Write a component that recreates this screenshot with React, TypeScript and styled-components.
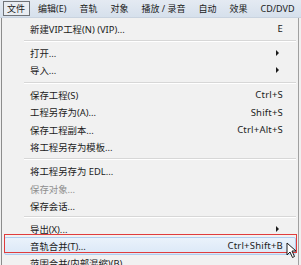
import React from "react";
import styled, { createGlobalStyle } from "styled-components";

const Global = createGlobalStyle`
  html, body { margin: 0; padding: 0; background: #f0f0f0; overflow: hidden; }
  #root { width: 301px; height: 265px; }
`;

const Page = styled.div`
  width: 301px;
  height: 265px;
  overflow: hidden;
  display: flex;
  flex-direction: column;
  background: #f0f0f0;
  font-family: "Noto Sans", "Noto Sans CJK SC", sans-serif;
  color: #1b1b1b;
`;

const MenuBar = styled.div`
  height: 18px;
  flex: none;
  display: flex;
  align-items: center;
  gap: 4px;
  padding-left: 3px;
  background: linear-gradient(#e4eaf2, #d6e0ec);
  border-bottom: 1px solid #c9d3df;
  box-sizing: border-box;
`;

const BarItem = styled.div<{ $active?: boolean }>`
  height: 15px;
  display: flex;
  align-items: center;
  padding: 0 4px 0 3px;
  font-size: 9px;
  line-height: 1;
  white-space: nowrap;
  border: 1px solid ${(p) => (p.$active ? "#6f7378" : "transparent")};
  background: ${(p) => (p.$active ? "#e9edf2" : "transparent")};
  box-sizing: border-box;
`;

const Menu = styled.div`
  flex: 1;
  margin: 0 2px 0 1px;
  border-left: 1px solid #8c8c8c;
  border-right: 1px solid #a0a0a0;
  background: #f1f1f1;
  padding: 2px 2px 0 2px;
  display: flex;
  flex-direction: column;
`;

const Row = styled.div<{ $disabled?: boolean; $hot?: boolean }>`
  position: relative;
  height: 17.4px;
  flex: none;
  display: flex;
  align-items: center;
  padding: 0 12px 0 25px;
  font-size: 9.4px;
  white-space: nowrap;
  color: ${(p) => (p.$disabled ? "#8e8e8e" : "#1b1b1b")};
  border: 1px solid ${(p) => (p.$hot ? "#b0cdef" : "transparent")};
  border-radius: 2px;
  background: ${(p) =>
    p.$hot ? "linear-gradient(#eaf2fb, #dbe8f7)" : "transparent"};
  box-sizing: border-box;
`;

const Label = styled.span`
  flex: 1;
`;

const Shortcut = styled.span`
  font-size: 9.5px;
  letter-spacing: 0.2px;
`;

const Arrow = styled.span`
  width: 0;
  height: 0;
  margin-right: 4px;
  border-top: 3px solid transparent;
  border-bottom: 3px solid transparent;
  border-left: 3px solid #1b1b1b;
`;

const Separator = styled.div<{ $h: number }>`
  height: ${(p) => p.$h}px;
  flex: none;
  display: flex;
  align-items: center;
  padding-left: 20px;
  &::after {
    content: "";
    flex: 1;
    height: 1px;
    background: #d7d7d7;
    border-bottom: 1px solid #ffffff;
  }
`;

const Annotation = styled.div`
  position: absolute;
  left: -1px;
  right: -2px;
  top: -4px;
  bottom: 1px;
  border: 1.5px solid #e03c3c;
  pointer-events: none;
`;

const Cursor = styled.svg`
  position: absolute;
  right: -2px;
  top: 4px;
`;

type Item =
  | { sep: number }
  | { label: string; shortcut?: string; sub?: boolean; disabled?: boolean; hot?: boolean };

const items: Item[] = [
  { label: "新建VIP工程(N) (VIP)...", shortcut: "E" },
  { sep: 7 },
  { label: "打开...", sub: true },
  { label: "导入...", sub: true },
  { sep: 7 },
  { label: "保存工程(S)", shortcut: "Ctrl+S" },
  { label: "工程另存为(A)...", shortcut: "Shift+S" },
  { label: "保存工程副本...", shortcut: "Ctrl+Alt+S" },
  { label: "将工程另存为模板..." },
  { sep: 7 },
  { label: "将工程另存为  EDL..." },
  { label: "保存对象...", disabled: true },
  { label: "保存会话..." },
  { sep: 5 },
  { label: "导出(X)...", sub: true },
  { label: "音轨合并(T)...", shortcut: "Ctrl+Shift+B", hot: true },
  { label: "范围合并(内部混缩)(B)" },
];

const bar = ["文件", "编辑(E)", "音轨", "对象", "播放 / 录音", "自动", "效果", "CD/DVD"];

export default function App() {
  return (
    <Page>
      <Global />
      <MenuBar>
        {bar.map((b, i) => (
          <BarItem key={b} $active={i === 0}>
            {b}
          </BarItem>
        ))}
      </MenuBar>
      <Menu>
        {items.map((it, i) =>
          "sep" in it ? (
            <Separator key={i} $h={it.sep} />
          ) : (
            <Row key={i} $disabled={it.disabled} $hot={it.hot}>
              <Label>{it.label}</Label>
              {it.shortcut && <Shortcut>{it.shortcut}</Shortcut>}
              {it.sub && <Arrow />}
              {it.hot && (
                <>
                  <Annotation />
                  <Cursor width="11" height="17" viewBox="0 0 11 17">
                    <path
                      d="M1 1 L1 13 L4 10 L6.5 15.5 L8.5 14.5 L6 9 L10 9 Z"
                      fill="#ffffff"
                      stroke="#1a1a1a"
                      strokeWidth="1"
                      strokeLinejoin="round"
                    />
                  </Cursor>
                </>
              )}
            </Row>
          )
        )}
      </Menu>
    </Page>
  );
}
